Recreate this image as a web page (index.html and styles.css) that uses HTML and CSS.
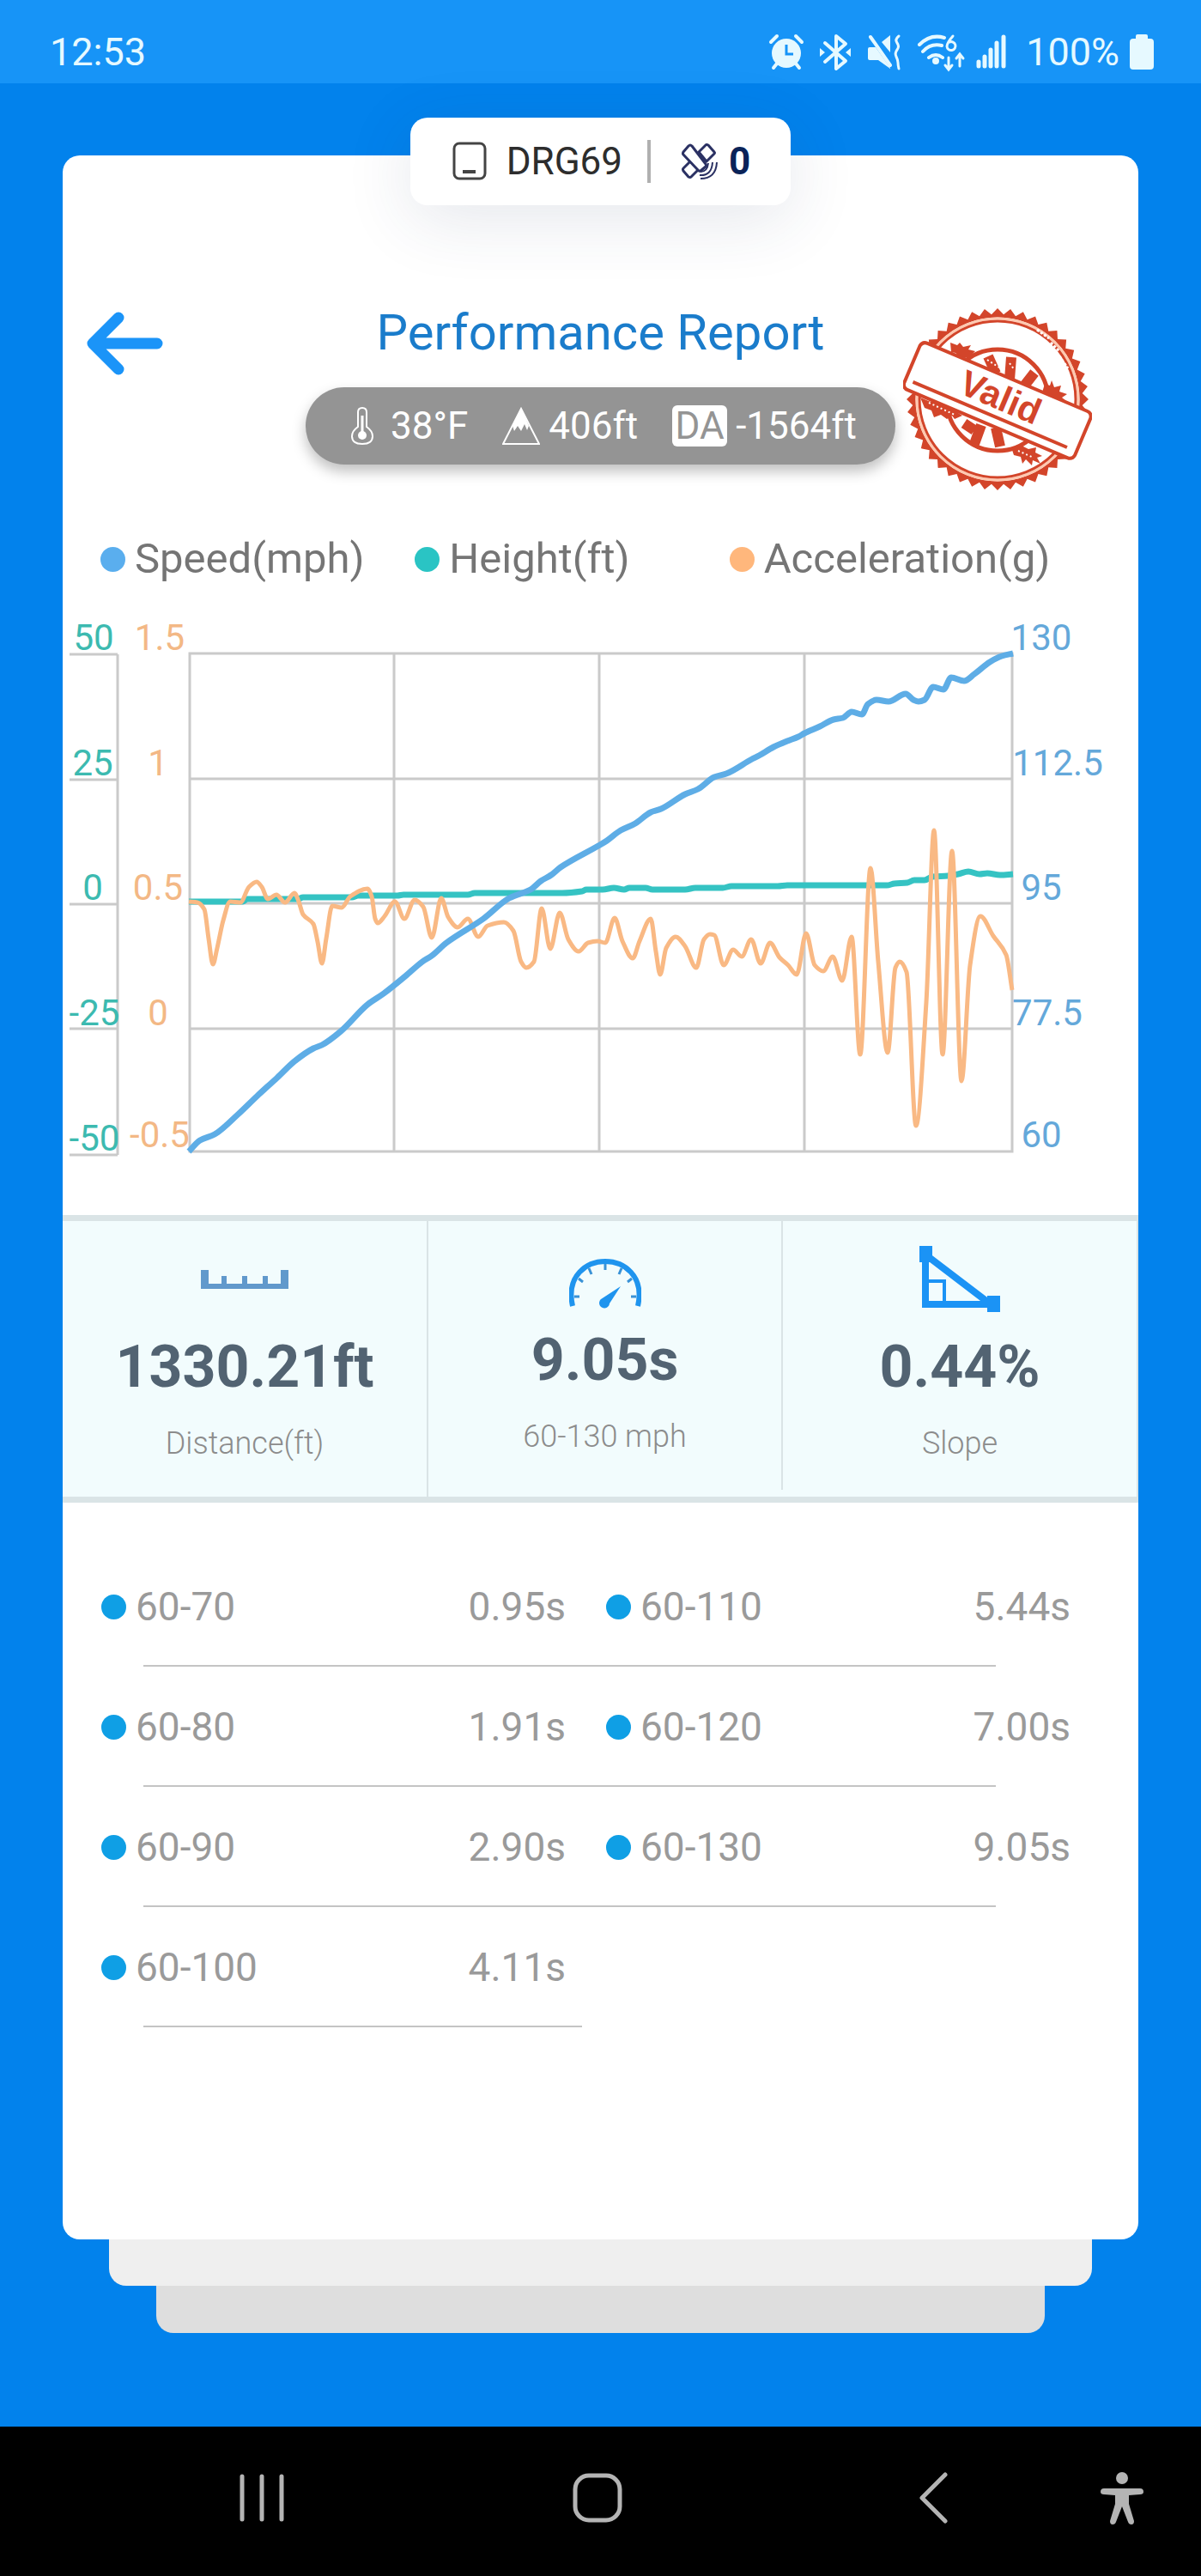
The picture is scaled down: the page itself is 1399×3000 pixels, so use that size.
FILE: index.html
```html
<!DOCTYPE html>
<html lang="en">
<head>
  <meta charset="UTF-8">
  <meta name="viewport" content="width=device-width, initial-scale=1">
  <title>Performance Report</title>
  <link rel="stylesheet" href="styles.css">
</head>
<body>
  <div class="status-bar">
    <span class="status-time">12:53</span>
    <div class="status-icons">
      <svg width="46" height="48" viewBox="0 0 46 48">
        <circle cx="23" cy="25" r="17" fill="currentColor"/>
        <path d="M12 37l-4 5M34 37l4 5M5 12l7-7M41 12l-7-7" stroke="currentColor" stroke-width="4" stroke-linecap="round"/>
        <path d="M23 15v11h8" fill="none" stroke="#1794f7" stroke-width="3"/>
      </svg>
      <svg width="44" height="48" viewBox="0 0 44 48">
        <path d="M10 13l24 21-11 9V5l11 9-24 21" fill="none" stroke="currentColor" stroke-width="4" stroke-linejoin="round" stroke-linecap="round"/>
        <path d="M4 19l6 5-6 5zM40 19l-6 5 6 5z" fill="currentColor"/>
      </svg>
      <svg width="48" height="48" viewBox="0 0 48 48">
        <path d="M4 20q0-2 2-2h7l17 24v1L16 33H6q-2 0-2-2zM30 4v20l-10-12z" fill="currentColor"/>
        <path d="M7 6l23 33" stroke="currentColor" stroke-width="4" stroke-linecap="round"/>
        <path d="M40 5q-5 4-2 8t0 8-1 8 2 7 1 7" fill="none" stroke="currentColor" stroke-width="3" stroke-linecap="round"/>
      </svg>
      <svg width="58" height="48" viewBox="0 0 58 48" fill="none" stroke="currentColor" stroke-width="4" stroke-linecap="round">
        <path d="M4 15q13-13 29-8M8 23q9-10 22-7M15 30q8-6 16 0"/>
        <path d="M43 5q-7 8-7 12a5 5 0 1 0 3-5M38 30v13M34 39l4 5 4-5M51 40V27M47 31l4-5 4 5" stroke-width="3"/>
        <circle cx="23" cy="34" r="2" fill="currentColor"/>
      </svg>
      <svg width="46" height="48" viewBox="0 0 46 48" stroke="currentColor" stroke-width="5" stroke-linecap="round">
        <path d="M3 35v5M10 29v11M17 21v19M24 13v27M32 6v34"/>
      </svg>
      <span>100%</span>
      <svg width="28" height="48" viewBox="0 0 28 48">
        <path d="M9 3h10q2 0 2 2v3h3q4 0 4 4v28q0 4-4 4H4q-4 0-4-4V12q0-4 4-4h3V5q0-2 2-2z" fill="currentColor"/>
      </svg>
    </div>
  </div>

  <main class="page">
    <section class="card">
      <div class="device">
        <svg width="40" height="46" viewBox="0 0 40 46" fill="none" stroke="#444">
          <rect x="2" y="2" width="36" height="41" rx="6" stroke-width="3"/>
          <path d="M12 35h15" stroke-width="4"/>
        </svg>
        <span class="device-name">DRG69</span>
        <span class="device-line"></span>
        <svg width="42" height="42" viewBox="0 0 42 42" fill="#fff" stroke="#2b3163" stroke-width="3" stroke-linejoin="round">
          <path d="M20 10l8-8q1-1 3 0l7 8q1 1 0 2l-9 9zM13 18L2 29q-1 1 0 3l6 7q2 1 3 0l11-11z"/>
          <path d="M2 10l6-7q2-2 4 0l16 21q1 2 0 3l-6 5q-1 1-3-1L2 13q-1-1 0-3z"/>
          <path d="M22 33q8 0 9-10M21 37q14 1 15-15M22 41q18 0 19-19" fill="none" stroke-width="2"/>
        </svg>
        <b class="device-sats">0</b>
      </div>

      <header class="report-head">
        <button class="back" type="button" aria-label="Back">
          <svg width="90" height="74" viewBox="0 0 90 74" fill="none" stroke="#1b94f8" stroke-width="13" stroke-linecap="round" stroke-linejoin="round">
            <path d="M37 7L7 37l30 30M10 37h72"/>
          </svg>
        </button>
        <div class="report-title">
          <h1>Performance Report</h1>
          <div class="weather">
            <span class="weather-item">
              <svg width="36" height="48" viewBox="0 0 36 48" fill="none" stroke="#fff" stroke-width="2">
                <path d="M8 25V8q0-5 5-5t5 5v17q7 5 7 11 0 9-12 9T1 36q0-6 7-11z"/>
                <path d="M13 12v20" stroke-width="3"/>
                <circle cx="13" cy="35" r="5" fill="#fff" stroke="none"/>
              </svg>38°F
            </span>
            <span class="weather-item">
              <svg width="44" height="48" viewBox="0 0 44 48">
                <path d="M22 4L1 45h42z" fill="none" stroke="#fff" stroke-width="2"/>
                <path d="M22 3L12 24l2 6 4-6 4 6 4-8 3 7 2-5z" fill="#fff"/>
              </svg>406ft
            </span>
            <span class="weather-item"><span class="da">DA</span>-1564ft</span>
          </div>
        </div>
        <svg class="stamp" width="220" height="212" viewBox="0 0 220 212">
          <g fill="none" stroke="#d3452a">
            <polygon id="stamp-teeth" points="" fill="#d3452a" stroke="none"/>
            <circle cx="110" cy="106" r="97" fill="#fff" stroke-width="3"/>
            <circle cx="110" cy="106" r="94" stroke="#ffc9b0" stroke-width="3"/>
            <circle cx="110" cy="106" r="91" stroke-width="3"/>
            <circle cx="110" cy="107" r="59" stroke-width="5"/>
            <path d="M99 56l9 20M126 57l-2 26M153 75l-14 18M71 134l12 8M91 136l-8 22M108 139l5 22" stroke-width="12"/>
          </g>
          <path d="M55 40l8 3 3-3 4 5 9-2-3 5 8 2-6 6-6 2-7-2-4-4-5-1zM165 88l6 2 2-6 3 8 8-2-2 7 9 3-6 4 5 4-10 3-12-5-6-8zM20 104l12 5 12-2 8 7 12-1-3 7 8 5-9 4-3-4-6 4-7-5-8 3-3-8-8-3zM126 162l12-2 8 4 9-2-1 6 8 4-6 2 4 7-9-4-1 6-7-7-4 5-2-8-8-2z" fill="#d3452a"/>
          <path d="M156 25l14 10M172 40l10 10M182 56l10 14M18 160l8 14M30 178l12 11" stroke="#fff" stroke-width="3" stroke-dasharray="3 2"/>
          <path d="M98 60l14 9M124 64l6 8M30 110l30 14M134 166l18 8" stroke="#fff" stroke-width="2" stroke-dasharray="2 3"/>
          <g transform="translate(110 107) rotate(23)">
            <path d="M-101-29q-6 0-7 6v47q1 6 7 6h202q6 0 7-6v-47q-1-6-7-6z" fill="#fff" stroke="#d3452a" stroke-width="4"/>
            <path d="M-99 19H96" stroke="#d3452a" stroke-width="4"/>
            <text class="stamp-text" x="2" y="10">Valid</text>
          </g>
        </svg>
      </header>

      <ul class="legend">
        <li><i class="dot speed"></i>Speed(mph)</li>
        <li><i class="dot height"></i>Height(ft)</li>
        <li><i class="dot accel"></i>Acceleration(g)</li>
      </ul>

      <svg class="chart" viewBox="73 697 1253 678">
        <g class="grid">
          <path d="M81 762h56M81 908h56M81 1053h56M81 1198h56M81 1345h56M137 762v583"/>
          <path d="M221 761h958v580H221zM221 907h958M221 1052h958M221 1198h958M459 761v580M698 761v580M937 761v580"/>
        </g>
        <g class="axis height">
          <text x="109" y="757">50</text>
          <text x="108" y="903">25</text>
          <text x="108" y="1048">0</text>
          <text x="110" y="1194">-25</text>
          <text x="110" y="1340">-50</text>
        </g>
        <g class="axis accel">
          <text x="186" y="757">1.5</text>
          <text x="184" y="903">1</text>
          <text x="184" y="1048">0.5</text>
          <text x="184" y="1194">0</text>
          <text x="186" y="1336">-0.5</text>
        </g>
        <g class="axis speed">
          <text x="1213" y="757">130</text>
          <text x="1232" y="903">112.5</text>
          <text x="1213" y="1048">95</text>
          <text x="1220" y="1194">77.5</text>
          <text x="1213" y="1336">60</text>
        </g>
        <path id="line-height" class="line height"/>
        <path id="line-accel" class="line accel"/>
        <path id="line-speed" class="line speed"/>
      </svg>

      <div class="stats">
        <div class="stat">
          <svg width="102" height="78" viewBox="0 0 102 78">
            <path d="M0 28h9v16h15V35h6v9h18V35h6v9h18V35h6v9h15V28h9v22H0z" fill="#6199cc"/>
          </svg>
          <strong>1330.21ft</strong>
          <span>Distance(ft)</span>
        </div>
        <div class="stat stat-main">
          <svg width="84" height="78" viewBox="0 0 84 78">
            <path d="M4 70C-4 34 21 18 42 18s46 16 38 52" fill="none" stroke="#1f94ee" stroke-width="6"/>
            <path d="M6 59h6M11 38l5 4M23 26l3 7M42 21v7M61 26l-3 7M73 38l-5 4M78 59h-6" stroke="#3a92d6" stroke-width="3"/>
            <path d="M60 47L47 67a6 6 0 1 1-10-5z" fill="#1f94ee"/>
          </svg>
          <strong>9.05s</strong>
          <span>60-130 mph</span>
        </div>
        <div class="stat">
          <svg width="94" height="78" viewBox="0 0 94 78" fill="none" stroke="#1b93f5">
            <path d="M7 10v58h76z" stroke-width="8"/>
            <path d="M10 41h19v25" stroke-width="4"/>
            <path d="M0 0h15v19H0zM79 58h15v19H79z" fill="#1b93f5" stroke="none"/>
          </svg>
          <strong>0.44%</strong>
          <span>Slope</span>
        </div>
      </div>

      <table class="splits">
        <tbody>
          <tr>
            <th scope="row"><i class="dot"></i>60-70</th><td>0.95s</td>
            <th scope="row"><i class="dot"></i>60-110</th><td>5.44s</td>
          </tr>
          <tr>
            <th scope="row"><i class="dot"></i>60-80</th><td>1.91s</td>
            <th scope="row"><i class="dot"></i>60-120</th><td>7.00s</td>
          </tr>
          <tr>
            <th scope="row"><i class="dot"></i>60-90</th><td>2.90s</td>
            <th scope="row"><i class="dot"></i>60-130</th><td>9.05s</td>
          </tr>
          <tr>
            <th scope="row"><i class="dot"></i>60-100</th><td>4.11s</td>
          </tr>
        </tbody>
      </table>
    </section>
    <div class="sheet sheet-1"></div>
    <div class="sheet sheet-2"></div>
  </main>

  <nav class="nav-bar">
    <button type="button" aria-label="Recents">
      <svg width="52" height="62" viewBox="0 0 52 62" stroke="#b4b4b4" stroke-width="5" stroke-linecap="round">
        <path d="M3 6v50M26 6v50M49 6v50"/>
      </svg>
    </button>
    <button type="button" aria-label="Home">
      <svg width="58" height="62" viewBox="0 0 58 62" fill="none" stroke="#b4b4b4" stroke-width="5">
        <rect x="3" y="5" width="52" height="52" rx="16"/>
      </svg>
    </button>
    <button type="button" aria-label="Back">
      <svg width="34" height="62" viewBox="0 0 34 62" fill="none" stroke="#b4b4b4" stroke-width="5" stroke-linecap="round" stroke-linejoin="round">
        <path d="M31 4L4 31l27 27"/>
      </svg>
    </button>
    <button type="button" aria-label="Accessibility">
      <svg width="50" height="62" viewBox="0 0 50 62" fill="#b4b4b4">
        <circle cx="25" cy="8" r="7"/>
        <path d="M4 20h42q4 0 4 4 0 3-4 3l-13 1v10l6 20q0 4-3 4t-4-3l-7-18-7 18q-1 3-4 3t-3-4l6-20V28L4 27q-4 0-4-3 0-4 4-4z"/>
      </svg>
    </button>
  </nav>

  <script>
    const lines = {
      height: [
        [220,1050],[283,1050],[288,1047],[347,1047],[353,1045],[410,1045],[417,1043],[463,1043],[470,1042],
        [545,1042],[553,1040],[655,1040],[678,1038],[683,1036],[702,1036],[715,1034],[727,1036],[733,1034],
        [752,1034],[760,1036],[798,1036],[810,1034],[842,1034],[852,1032],[906,1032],[917,1031],[1016,1031],
        [1033,1031],[1042,1029],[1057,1028],[1065,1025],[1077,1025],[1086,1021],[1104,1020],[1116,1018],
        [1128,1015],[1141,1018],[1150,1017],[1165,1019],[1180,1018]
      ],
      accel: [
        [220,1050],[230,1051],[238,1059],[243,1093],[248,1123],[253,1104],[260,1072],[268,1050],[280,1051],
        [290,1033],[299,1027],[305,1033],[312,1047],[322,1042],[332,1051],[343,1040],[348,1050],[353,1065],
        [365,1076],[370,1097],[375,1122],[380,1093],[387,1055],[398,1057],[408,1044],[428,1035],[433,1044],
        [437,1070],[440,1075],[448,1067],[460,1050],[471,1070],[483,1048],[493,1056],[503,1092],[514,1046],
        [522,1068],[533,1080],[545,1070],[557,1091],[568,1078],[587,1074],[598,1084],[607,1120],[613,1127],
        [622,1120],[631,1058],[641,1105],[652,1063],[662,1094],[674,1108],[685,1098],[696,1096],[705,1098],
        [716,1069],[725,1096],[737,1116],[745,1096],[758,1070],[764,1108],[769,1135],[776,1104],[787,1091],
        [798,1102],[811,1127],[820,1094],[827,1088],[832,1089],[843,1124],[854,1106],[864,1114],[875,1094],
        [886,1122],[897,1098],[908,1115],[918,1124],[928,1135],[939,1087],[949,1124],[959,1131],[970,1114],
        [981,1142],[992,1091],[1002,1228],[1014,1011],[1023,1120],[1034,1226],[1043,1127],[1048,1120],
        [1056,1132],[1067,1311],[1079,1167],[1088,967],[1098,1228],[1109,991],[1120,1259],[1130,1124],
        [1142,1067],[1157,1090],[1172,1112],[1179,1153]
      ],
      speed: [
        [220,1341],[233,1328],[250,1321],[277,1298],[300,1276],[323,1255],[343,1236],[365,1221],[375,1217],
        [397,1201],[428,1170],[447,1157],[472,1137],[492,1120],[503,1113],[520,1098],[563,1070],[593,1046],
        [618,1036],[630,1026],[642,1019],[653,1010],[697,985],[707,979],[723,967],[740,959],[758,946],
        [770,942],[798,925],[813,919],[832,905],[846,901],[876,884],[884,880],[901,870],[917,863],[930,858],
        [937,854],[955,846],[971,838],[982,836],[992,829],[1004,832],[1011,820],[1021,815],[1035,817],
        [1055,808],[1064,815],[1070,817],[1077,815],[1087,800],[1099,803],[1108,789],[1123,793],[1135,785],
        [1153,771],[1167,764],[1180,761]
      ]
    };

    // Smooth curve that stays flat at every peak and valley
    function curve(pts) {
      const slope = i => (pts[i + 1][1] - pts[i][1]) / (pts[i + 1][0] - pts[i][0]);
      const tangent = pts.map((p, i) => {
        if (i === 0) return slope(0);
        if (i === pts.length - 1) return slope(i - 1);
        const a = slope(i - 1), b = slope(i);
        return a * b <= 0 ? 0 : 2 * a * b / (a + b);
      });
      let d = `M${pts[0]}`;
      for (let i = 1; i < pts.length; i++) {
        const [x0, y0] = pts[i - 1];
        const [x1, y1] = pts[i];
        const h = (x1 - x0) / 3;
        d += `C${x0 + h},${y0 + h * tangent[i - 1]} ${x1 - h},${y1 - h * tangent[i]} ${x1},${y1}`;
      }
      return d;
    }

    for (const name in lines) {
      document.getElementById('line-' + name).setAttribute('d', curve(lines[name]));
    }

    // Serrated edge of the stamp
    const teeth = [];
    for (let i = 0; i < 88; i++) {
      const r = i % 2 ? 99 : 106;
      const a = Math.PI * i / 44;
      teeth.push(`${110 + r * Math.sin(a)},${106 - r * Math.cos(a)}`);
    }
    document.getElementById('stamp-teeth').setAttribute('points', teeth.join(' '));
  </script>
</body>
</html>
```
FILE: styles.css
```css
* {
  box-sizing: border-box;
}

body {
  margin: 0;
  min-height: 100vh;
  display: flex;
  flex-direction: column;
  background: #0282ec;
  font-family: Roboto, "Liberation Sans", sans-serif;
}

svg {
  display: block;
  flex-shrink: 0;
}

button {
  padding: 0;
  border: none;
  background: none;
  cursor: pointer;
}

.status-bar {
  display: flex;
  justify-content: space-between;
  align-items: center;
  height: 97px;
  padding: 24px 55px 0 58px;
  background: #1794f7;
  color: #e6f9ff;
  font-size: 45px;
}

.status-icons {
  display: flex;
  align-items: center;
  gap: 12px;
}

.page {
  flex: 1;
  padding: 84px 73px 108px;
}

.card {
  display: flex;
  flex-direction: column;
  padding-bottom: 247px;
  background: #fff;
  border-radius: 20px;
}

.device {
  display: flex;
  align-items: center;
  align-self: center;
  height: 102px;
  margin-top: -44px;
  padding: 0 47px 0 49px;
  background: #fff;
  border-radius: 20px;
  box-shadow: 0 16px 80px rgba(40, 60, 100, 0.12);
  font-size: 44px;
  color: #2d2d2d;
}

.device-name {
  margin: 0 29px 0 23px;
}

.device-line {
  width: 4px;
  height: 50px;
  background: #b0b0b0;
}

.device-sats {
  margin-left: 13px;
  color: #0a2358;
}

.device-line + svg {
  margin-left: 36px;
}

.report-head {
  display: grid;
  grid-template-columns: 1fr auto 1fr;
  align-items: start;
  margin-top: 114px;
}

.back {
  justify-self: start;
  margin: 10px 0 0 28px;
}

.report-title {
  text-align: center;
}

h1 {
  margin: 0 0 30px;
  font-size: 58px;
  font-weight: 400;
  line-height: 68px;
  color: #1a7ccb;
}

.weather {
  display: flex;
  align-items: center;
  gap: 40px;
  height: 90px;
  padding: 0 45px 0 53px;
  border-radius: 45px;
  background: #949494;
  box-shadow: 0 8px 16px rgba(0, 0, 0, 0.25);
  color: #fff;
  font-size: 44px;
}

.weather-item {
  display: flex;
  align-items: center;
  gap: 10px;
}

.da {
  width: 64px;
  border-radius: 6px;
  background: #fff;
  color: #949494;
  line-height: 48px;
}

.stamp {
  justify-self: end;
  margin: 6px 54px 0 0;
}

.stamp-text {
  font-family: "Liberation Sans", sans-serif;
  font-size: 42px;
  font-weight: bold;
  text-anchor: middle;
  fill: #d3452a;
}

.legend {
  display: grid;
  grid-template-columns: repeat(3, 1fr);
  margin: 52px 0 18px;
  padding: 0 110px 0 44px;
  list-style: none;
  font-size: 49px;
  line-height: 56px;
  color: #757575;
}

.legend li {
  display: flex;
  align-items: center;
  min-width: 0;
  white-space: nowrap;
}

.dot {
  flex-shrink: 0;
  width: 29px;
  height: 29px;
  margin-right: 11px;
  border-radius: 50%;
  background: #0f9fe5;
}

.dot.speed {
  background: #5aaeee;
}

.dot.height {
  background: #2ac4c4;
}

.dot.accel {
  background: #ffb77c;
}

.chart {
  width: 100%;
  height: auto;
}

.grid {
  fill: none;
  stroke: #cacaca;
  stroke-width: 3;
}

.axis {
  font-size: 42px;
  text-anchor: middle;
}

.axis.height {
  fill: #3cbab0;
}

.axis.accel {
  fill: #f3b885;
}

.axis.speed {
  fill: #64a8da;
}

.line {
  fill: none;
  stroke-width: 7;
  stroke-linejoin: round;
}

.line.height {
  stroke: #35c3c3;
}

.line.accel {
  stroke: #f9b984;
  stroke-width: 5;
}

.line.speed {
  stroke: #5eade6;
}

.stats {
  display: grid;
  grid-template-columns: 426fr 413fr 414fr;
  margin-top: 40px;
  border-top: 7px solid #dae4e6;
  border-bottom: 7px solid #dae4e6;
  background: #f2fcfd;
}

.stat {
  display: flex;
  flex-direction: column;
  align-items: center;
  height: 321px;
  padding-top: 29px;
  border-right: 2px solid #dae4e6;
}

.stat strong {
  margin-top: 23px;
  font-size: 68px;
  font-weight: 700;
  line-height: 80px;
  color: #526372;
}

.stat span {
  margin-top: 28px;
  font-size: 36px;
  font-weight: 300;
  line-height: 42px;
  color: #8c8c8c;
}

.stat-main {
  height: 313px;
}

.stat-main strong {
  margin-top: 15px;
}

.splits {
  display: block;
  margin-top: 51px;
  padding: 0 32px 0 45px;
  font-size: 46px;
  color: #9a9a9a;
}

.splits tbody {
  display: block;
}

.splits tr {
  display: flex;
  flex-wrap: wrap;
}

.splits th,
.splits td {
  display: flex;
  align-items: center;
  width: 25%;
  height: 138px;
  padding: 2px 0 0;
  font-weight: 400;
}

.splits td {
  justify-content: flex-end;
  padding-right: 47px;
}

.splits tr::after {
  content: "";
  width: calc(100% - 183px);
  height: 2px;
  margin-left: 49px;
  background: #c4c4c4;
}

.splits tr:last-child::after {
  width: calc(50% - 77px);
  margin-right: 50%;
}

.sheet {
  height: 54px;
  border-radius: 0 0 20px 20px;
}

.sheet-1 {
  margin: 0 54px;
  background: #efefef;
}

.sheet-2 {
  height: 55px;
  margin: 0 109px;
  background: #dedede;
}

.nav-bar {
  display: grid;
  grid-template-columns: 1fr 1fr 1fr 50px;
  align-items: center;
  justify-items: center;
  height: 174px;
  padding: 0 67px 8px 110px;
  background: #000;
}
```
